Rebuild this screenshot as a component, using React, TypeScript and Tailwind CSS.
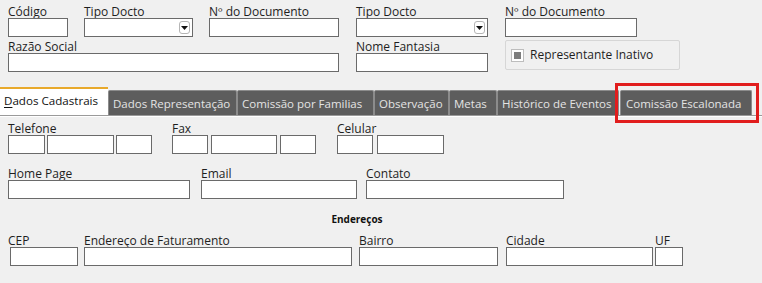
import React from 'react';

const FONT = { fontFamily: '"Open Sans", "Noto Sans", Arial, sans-serif' };

function Label({ text }: { text: string }) {
  return <div className="text-[12px] leading-[12px] h-[12px] text-[#1e1e1e] whitespace-nowrap">{text}</div>;
}

function Box({ w, select }: { w: string; select?: boolean }) {
  return (
    <div className={`relative h-[19px] bg-white border border-[#6a6a6a] ${w}`}>
      {select && (
        <div className="absolute right-[2px] top-[2px] w-[11px] h-[13px] rounded-[3px] border border-[#b5b5b5] bg-white flex items-center justify-center">
          <svg width="7" height="4" viewBox="0 0 7 4">
            <path d="M0 0 L7 0 L3.5 4 Z" fill="#111" />
          </svg>
        </div>
      )}
    </div>
  );
}

function Field({ label, w, select, className = '' }: { label: string; w: string; select?: boolean; className?: string }) {
  return (
    <div className={`flex flex-col ${className}`}>
      <Label text={label} />
      <Box w={w} select={select} />
    </div>
  );
}

const tabs = [
  { t: 'Dados Representação', w: 'w-[129px]' },
  { t: 'Comissão por Familias', w: 'w-[137px]' },
  { t: 'Observação', w: 'w-[75px]' },
  { t: 'Metas', w: 'w-[48px]' },
  { t: 'Histórico de Eventos', w: 'w-[122px]' },
];

export default function App() {
  return (
    <div className="w-[762px] h-[283px] bg-[#f0f0f0] overflow-hidden relative" style={FONT}>
      {/* header fields */}
      <div className="flex pt-[6px] pl-[8px]">
        <div className="flex flex-col gap-[4px] w-[331px]">
          <div className="flex">
            <Field label="Código" w="w-[60px]" />
            <Field label="Tipo Docto" w="w-[109px]" select className="ml-[16px]" />
            <Field label="Nº do Documento" w="w-[130px]" className="ml-[16px]" />
          </div>
          <Field label="Razão Social" w="w-[331px]" />
        </div>
        <div className="flex flex-col gap-[4px] ml-[17px]">
          <Field label="Tipo Docto" w="w-[132px]" select />
          <Field label="Nome Fantasia" w="w-[132px]" />
        </div>
        <div className="flex flex-col gap-[4px] ml-[17px]">
          <Field label="Nº do Documento" w="w-[132px]" />
          <div className="w-[175px] h-[30px] mt-[-1px] border border-[#d6d6d6] rounded-[2px] flex items-center pl-[5px] gap-[6px]">
            <div className="w-[13px] h-[13px] bg-white border border-[#bdbdbd] flex items-center justify-center">
              <div className="w-[7px] h-[7px] bg-[#7d7d7d]" />
            </div>
            <span className="text-[12px] text-[#1e1e1e]">Representante Inativo</span>
          </div>
        </div>
      </div>

      {/* tabs */}
      <div className="mt-[16px] flex items-end h-[28px] border-b border-[#9a9a9a]">
        <div className="w-[108px] h-[28px] bg-white border-t-2 border-[#e8a92c] text-[11.6px] text-[#111] pl-[4px] pt-[3px] whitespace-nowrap">
          <span className="underline underline-offset-2">D</span>ados Cadastrais
        </div>
        {tabs.map((t) => (
          <div
            key={t.t}
            className={`h-[25px] bg-[#5d5d5d] border border-[#8c8c8c] border-b-0 rounded-t-[2px] text-[11.5px] text-[#e4e4e4] pl-[4px] pt-[4px] whitespace-nowrap overflow-visible ${t.w}`}
          >
            {t.t}
          </div>
        ))}
        <div className="relative ml-[1px] w-[132px] h-[25px] bg-[#5d5d5d] border border-[#8c8c8c] border-b-0 rounded-t-[2px] text-[11.5px] text-[#e4e4e4] pl-[5px] pt-[4px] whitespace-nowrap">
          Comissão Escalonada
          <div className="absolute left-[-6px] right-[-8px] top-[-8px] bottom-[-8px] border-[3px] border-[#e11d1d]" />
        </div>
      </div>
      <div className="h-[1px] bg-white" />

      {/* contacts */}
      <div className="flex pl-[8px] pt-[6px]">
        <div className="flex flex-col">
          <Label text="Telefone" />
          <div className="flex gap-[2px]">
            <Box w="w-[37px]" />
            <Box w="w-[67px]" />
            <Box w="w-[36px]" />
          </div>
        </div>
        <div className="flex flex-col ml-[20px]">
          <Label text="Fax" />
          <div className="flex gap-[3px]">
            <Box w="w-[36px]" />
            <Box w="w-[66px]" />
            <Box w="w-[36px]" />
          </div>
        </div>
        <div className="flex flex-col ml-[21px]">
          <Label text="Celular" />
          <div className="flex gap-[4px]">
            <Box w="w-[36px]" />
            <Box w="w-[67px]" />
          </div>
        </div>
      </div>

      <div className="flex pl-[8px] pt-[14px]">
        <Field label="Home Page" w="w-[182px]" />
        <Field label="Email" w="w-[156px]" className="ml-[11px]" />
        <Field label="Contato" w="w-[198px]" className="ml-[9px]" />
      </div>

      <div className="mt-[14px] w-[714px] text-center text-[10px] leading-[12px] font-bold text-[#111]">Endereços</div>

      <div className="flex pl-[8px] pt-[10px]">
        <div className="flex flex-col">
          <Label text="CEP" />
          <div className="pl-[2px]"><Box w="w-[68px]" /></div>
        </div>
        <Field label="Endereço de Faturamento" w="w-[268px]" className="ml-[6px]" />
        <Field label="Bairro" w="w-[139px]" className="ml-[7px]" />
        <Field label="Cidade" w="w-[147px]" className="ml-[8px]" />
        <Field label="UF" w="w-[28px]" className="ml-[2px]" />
      </div>
    </div>
  );
}
